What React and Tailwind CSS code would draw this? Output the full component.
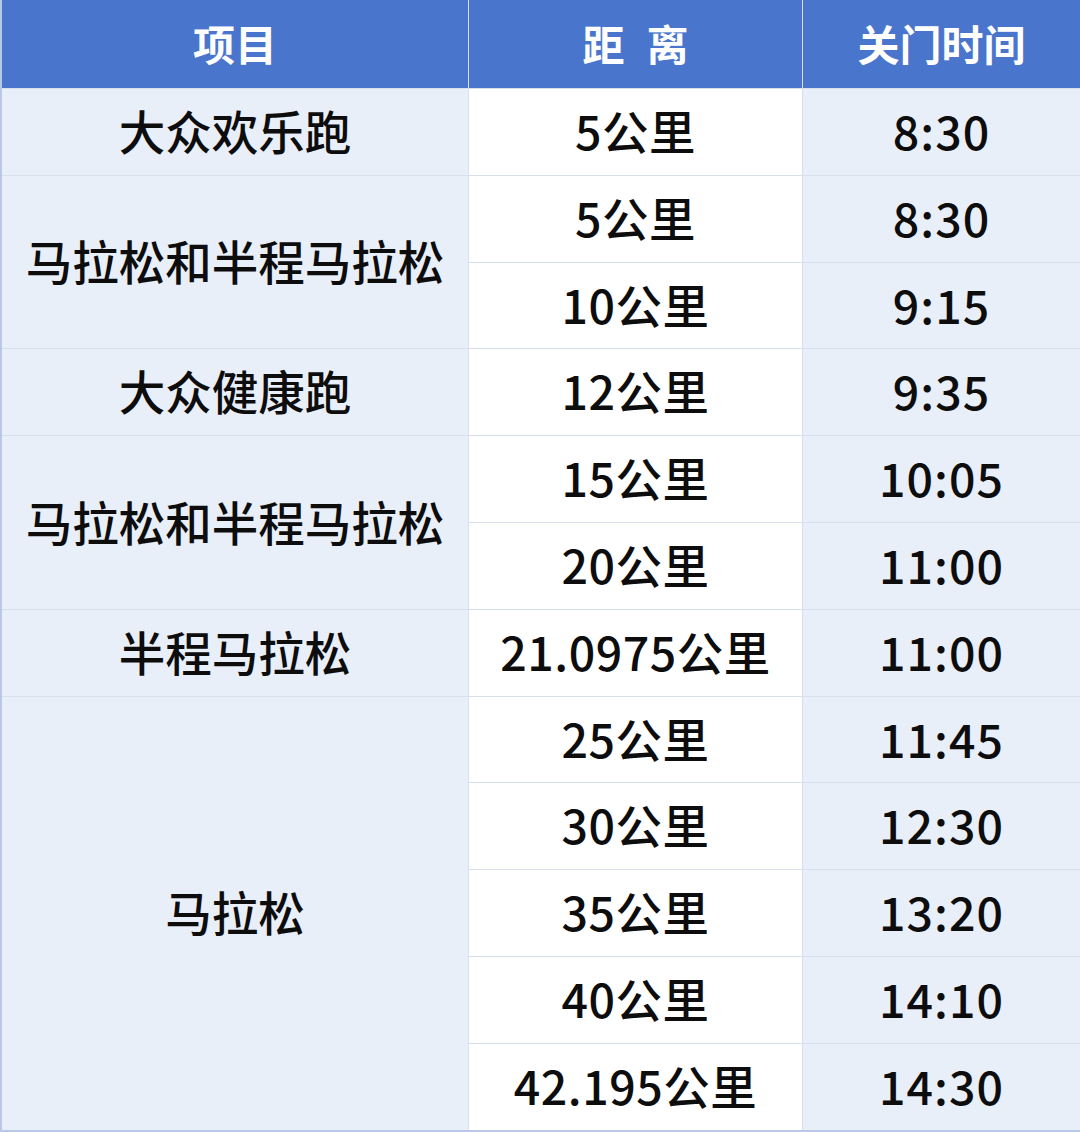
const rows = [
  { d: "5公里", t: "8:30" },
  { d: "5公里", t: "8:30" },
  { d: "10公里", t: "9:15" },
  { d: "12公里", t: "9:35" },
  { d: "15公里", t: "10:05" },
  { d: "20公里", t: "11:00" },
  { d: "21.0975公里", t: "11:00" },
  { d: "25公里", t: "11:45" },
  { d: "30公里", t: "12:30" },
  { d: "35公里", t: "13:20" },
  { d: "40公里", t: "14:10" },
  { d: "42.195公里", t: "14:30" },
];

// name, start row (grid line), span class
const groups = [
  { name: "大众欢乐跑", row: "row-start-2 row-span-1" },
  { name: "马拉松和半程马拉松", row: "row-start-3 row-span-2" },
  { name: "大众健康跑", row: "row-start-5 row-span-1" },
  { name: "马拉松和半程马拉松", row: "row-start-6 row-span-2" },
  { name: "半程马拉松", row: "row-start-8 row-span-1" },
  { name: "马拉松", row: "row-start-9 row-span-5" },
];

const rowStarts = [
  "row-start-2", "row-start-3", "row-start-4", "row-start-5", "row-start-6", "row-start-7",
  "row-start-8", "row-start-9", "row-start-10", "row-start-11", "row-start-12", "row-start-13",
];

export default function App() {
  return (
    <div
      className="w-[1080px] h-[1132px] bg-[#e9eff9] overflow-hidden text-[#0d0d0d]"
      style={{ fontFamily: '"Noto Sans CJK SC", "Noto Sans", sans-serif' }}
    >
      <div className="border-l-2 border-b-2 border-[#b9c8e6] grid grid-cols-[466px_333px_277px] grid-rows-[88px_repeat(12,85.8px)] gap-px bg-[#d7dfec]">
        {/* header */}
        <div className="col-start-1 row-start-1 bg-[#4a75cd] flex items-center justify-center text-white text-[42px] font-bold pb-1">项目</div>
        <div className="col-start-2 row-start-1 bg-[#4a75cd] flex items-center justify-center gap-[22px] text-white text-[42px] font-bold pb-1">
          <span>距</span>
          <span>离</span>
        </div>
        <div className="col-start-3 row-start-1 bg-[#4a75cd] flex items-center justify-center text-white text-[42px] font-bold pb-1">关门时间</div>

        {groups.map((g, i) => (
          <div key={i} className={`col-start-1 ${g.row} bg-[#e9eff9] flex items-center justify-center text-[46.5px] font-medium pb-1`}>
            {g.name}
          </div>
        ))}

        {rows.map((r, i) => (
          <div key={"d" + i} className={`col-start-2 ${rowStarts[i]} bg-white flex items-center justify-center text-[46.5px] font-medium tracking-[0.5px] pb-1`}>
            {r.d}
          </div>
        ))}
        {rows.map((r, i) => (
          <div key={"t" + i} className={`col-start-3 ${rowStarts[i]} bg-[#e9eff9] flex items-center justify-center text-[46.5px] font-medium tracking-[1px] pb-1`}>
            {r.t}
          </div>
        ))}
      </div>
    </div>
  );
}
